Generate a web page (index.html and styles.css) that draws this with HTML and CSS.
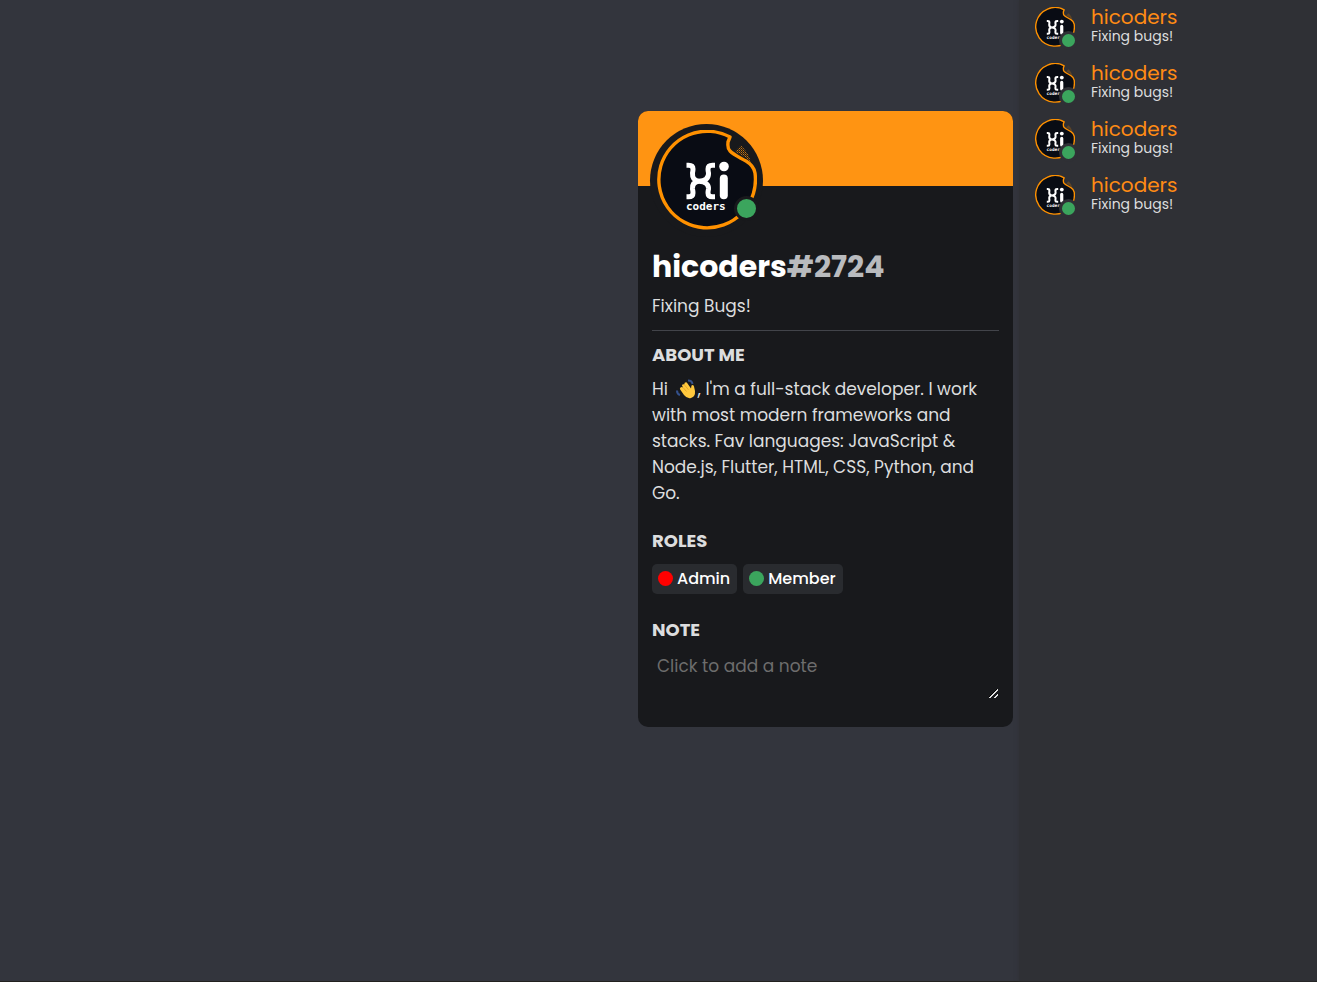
FILE: index.html
```html
<!DOCTYPE html>
<html lang="en">
<head>
<meta charset="utf-8">
<meta name="viewport" content="width=device-width, initial-scale=1">
<title>hicoders</title>
<link rel="stylesheet" href="styles.css">
</head>
<body>
<svg width="0" height="0" class="defs" aria-hidden="true">
  <defs>
    <pattern id="dots" width="2" height="2" patternUnits="userSpaceOnUse"><rect width="1" height="1" fill="#c87510"/><rect x="1" y="1" width="1" height="1" fill="#7a4b0f"/></pattern>
    <symbol id="logo" viewBox="0 0 100 100">
      <path d="M73 7A48.300 48.300 0 1 0 98 43C97 37 94 34 89 31C82 27 77 25 73 21C70 18 71 15 71 12Z" fill="#090c14" stroke="#ff9100" stroke-width="3.400" stroke-linejoin="round"/>
      <path d="M78 21.500L84 15.500Q91 22 94 32Q86 25 78 21.500Z" fill="url(#dots)"/>
      <g fill="none" stroke="#fff" stroke-width="5">
        <path d="M29.500 35.300H31.500Q36 35.300 36 39Q36 41 35.500 43Q35 50.500 42 51.300Q35 52 35.500 59Q36 61 36 63Q36 66.800 31.500 66.800H29.500"/>
        <path d="M58 35.300H55.500Q51 35.300 51 39Q51 41 51.500 43Q52 50.500 42 51.300Q52 52 51.500 59Q51 61 51 63Q51 66.800 55.500 66.800H58"/>
      </g>
      <circle cx="67" cy="36.500" r="4.800" fill="#fff"/>
      <rect x="62.800" y="44.500" width="8" height="24.700" rx="4" fill="#fff"/>
      <text x="29" y="79.500" class="logo-word">coders</text>
    </symbol>
  </defs>
</svg>
<div class="app">
  <main class="stage">
    <article class="card">
      <header class="banner">
        <div class="avatar avatar-large">
          <svg class="picture" role="img" aria-label="hicoders logo"><use href="#logo"/></svg>
          <span class="status"></span>
        </div>
      </header>
      <div class="details">
        <h1 class="name">hicoders<span class="tag">#2724</span></h1>
        <p class="activity">Fixing Bugs!</p>
        <h2 class="heading">ABOUT ME</h2>
        <p class="about">Hi <svg class="wave" viewBox="0 0 20 20" role="img" aria-label="waving hand"><path d="M12 1.500Q16 1.500 16.500 5M1 11.500Q1 15 4 16" fill="none" stroke="#34518c" stroke-width="2"/><path d="M4.500 8.500Q5.500 7.300 7 8.500L6 6.500Q6.500 4.500 8.200 5.500L8.700 3.800Q10.500 2.500 11.500 4.500L15 9.500L15.500 6.500Q17.500 5 18 7.500L19 12Q19.500 17.500 15 19Q11 20 8 16L4.500 11Q3.200 9.500 4.500 8.500Z" fill="#ffc83d"/><path d="M7 8.500L10.500 12.500M8.200 5.500L12.500 10.800" stroke="#d99a27" stroke-width=".7"/></svg>, I'm a full-stack developer. I work with most modern frameworks and stacks. Fav languages: JavaScript &amp; Node.js, Flutter, HTML, CSS, Python, and Go.</p>
        <h2 class="heading">ROLES</h2>
        <ul class="roles">
          <li class="role"><span class="dot dot-admin"></span>Admin</li>
          <li class="role"><span class="dot dot-member"></span>Member</li>
        </ul>
        <label class="heading" for="note">NOTE</label>
        <textarea id="note" class="note" placeholder="Click to add a note"></textarea>
      </div>
    </article>
  </main>
  <aside class="members">
    <ul class="member-list">
      <li class="member"><div class="avatar"><svg class="picture" role="img" aria-label="hicoders logo"><use href="#logo"/></svg><span class="status"></span></div><div><p class="member-name">hicoders</p><p class="member-activity">Fixing bugs!</p></div></li>
      <li class="member"><div class="avatar"><svg class="picture" role="img" aria-label="hicoders logo"><use href="#logo"/></svg><span class="status"></span></div><div><p class="member-name">hicoders</p><p class="member-activity">Fixing bugs!</p></div></li>
      <li class="member"><div class="avatar"><svg class="picture" role="img" aria-label="hicoders logo"><use href="#logo"/></svg><span class="status"></span></div><div><p class="member-name">hicoders</p><p class="member-activity">Fixing bugs!</p></div></li>
      <li class="member"><div class="avatar"><svg class="picture" role="img" aria-label="hicoders logo"><use href="#logo"/></svg><span class="status"></span></div><div><p class="member-name">hicoders</p><p class="member-activity">Fixing bugs!</p></div></li>
    </ul>
  </aside>
</div>
</body>
</html>
```
FILE: styles.css
```css
* { box-sizing: border-box; margin: 0; padding: 0; }
body { font-family: Poppins, Inter, "Open Sans", sans-serif; background: #33353d; color: #dcddde; }
ul { list-style: none; }
.defs { position: absolute; }
.logo-word { font: bold 11px "DejaVu Sans Mono", monospace; fill: #fff; }
.app { display: flex; min-height: 100vh; border-bottom: 1px solid #22211f; }
.stage { flex: 1; display: flex; justify-content: flex-end; align-items: flex-start; padding: 111px 6px 24px; }
.members { width: 298px; background: #2f3035; box-shadow: 0 0 4px #2f3035; padding: 7px 16px; }

.card { width: 375px; background: #18191c; border-radius: 10px; overflow: hidden; }
.banner { height: 75px; padding: 13px 12px; background: #ff9412; }
.details { display: flex; flex-direction: column; padding: 61px 14px 27px; }

.avatar { position: relative; flex: none; width: 40px; height: 40px; }
.picture { display: block; width: 100%; height: 100%; }
.status { position: absolute; right: -3px; bottom: -3px; width: 19px; height: 19px; border: 3px solid #2f3035; border-radius: 50%; background: #3ba55d; }
.avatar-large { width: 113px; height: 113px; padding: 6px 6px 7px 7px; border-radius: 50%; background: #18191c; }
.avatar-large .status { right: 4px; bottom: 16px; width: 25px; height: 25px; border-color: #18191c; }

.name { color: #fff; font-size: 30px; line-height: 40px; font-weight: 700; }
.tag { color: #b9bbbe; }
.activity { font-size: 17px; line-height: 26px; padding: 6px 0 11px; border-bottom: 1px solid #42444a; }
.heading { color: #dcddde; font-size: 18px; line-height: 26px; font-weight: 700; }
.activity + .heading { margin-top: 11px; }
.about { font-size: 17px; line-height: 26px; margin: 8px 0 22px; }
.wave { width: 20px; height: 20px; margin: 0 2px 0 3px; vertical-align: -4px; }
.roles { display: flex; flex-wrap: wrap; gap: 6px; margin: 10px 0 23px; }
.role { display: flex; align-items: center; gap: 4px; height: 30px; padding: 0 7px 1px 6px; border-radius: 5px; background: #292b2f; color: #fff; font-size: 16px; font-weight: 500; }
.dot { width: 15px; height: 15px; border-radius: 50%; }
.dot-admin { background: #f00; }
.dot-member { background: #3ba55d; }
.note { width: 100%; height: 47px; margin-top: 10px; padding: 0 5px; border: 0; outline: 0; background: transparent; color: #dcddde; font: 17px/26px Poppins, Inter, "Open Sans", sans-serif; resize: vertical; }
.note::placeholder { color: #6d6d6d; }
.note::-webkit-resizer { background: linear-gradient(135deg, transparent 42%, #000 42%, #000 48%, #ddd 48%, #ddd 58%, transparent 58%, transparent 76%, #ddd 76%, #ddd 88%, transparent 88%) 5px 4px / 9px 9px no-repeat; }

.member-list { display: grid; gap: 16px; }
.member { display: flex; gap: 16px; height: 40px; }
.member-name { color: #ff8b14; font-size: 20px; line-height: 20px; }
.member-activity { font-size: 14px; line-height: 18px; }
```
